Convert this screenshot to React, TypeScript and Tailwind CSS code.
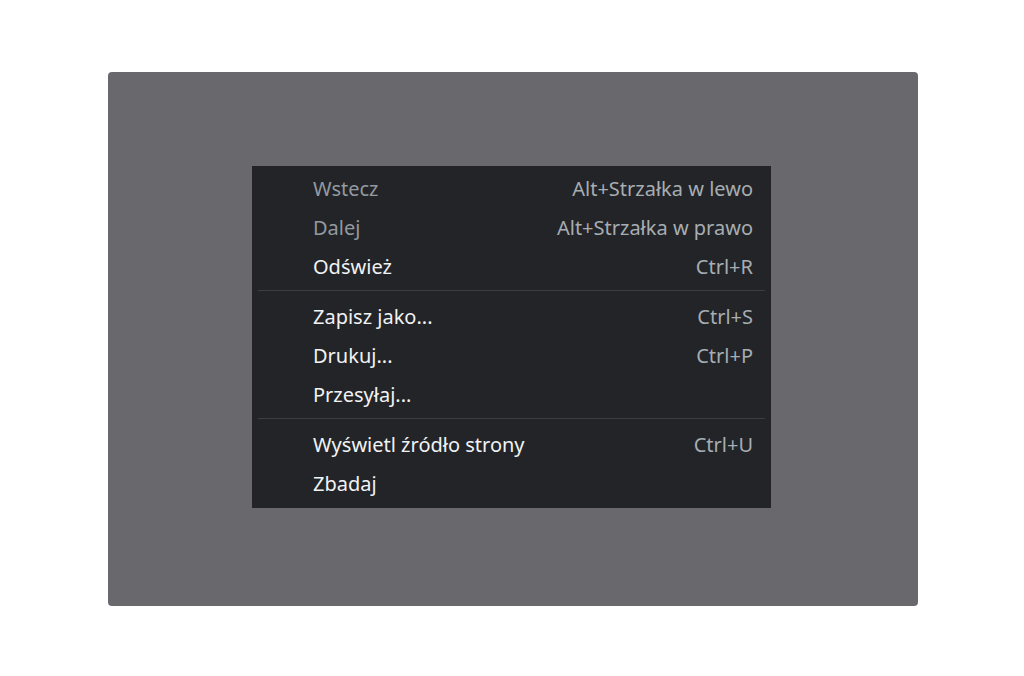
import React from "react";

type Item =
  | { kind: "item"; label: string; shortcut?: string; disabled?: boolean }
  | { kind: "sep" };

const items: Item[] = [
  { kind: "item", label: "Wstecz", shortcut: "Alt+Strzałka w lewo", disabled: true },
  { kind: "item", label: "Dalej", shortcut: "Alt+Strzałka w prawo", disabled: true },
  { kind: "item", label: "Odśwież", shortcut: "Ctrl+R" },
  { kind: "sep" },
  { kind: "item", label: "Zapisz jako...", shortcut: "Ctrl+S" },
  { kind: "item", label: "Drukuj...", shortcut: "Ctrl+P" },
  { kind: "item", label: "Przesyłaj..." },
  { kind: "sep" },
  { kind: "item", label: "Wyświetl źródło strony", shortcut: "Ctrl+U" },
  { kind: "item", label: "Zbadaj" },
];

export default function App() {
  return (
    <div
      className="w-[1024px] h-[676px] bg-white pl-[108px] pt-[72px]"
      style={{ fontFamily: '"Noto Sans", "Open Sans", sans-serif' }}
    >
      <div className="w-[810px] h-[534px] rounded-[4px] bg-[#69686d] pl-[144px] pt-[94px]">
        <div className="w-[519px] h-[342px] bg-[#232427] pt-[3px] pb-[5px]">
          {items.map((it, i) =>
            it.kind === "sep" ? (
              <div key={i} className="h-[11px] pt-[4px] pl-[6px] pr-[6px]">
                <div className="h-[1px] bg-[#3c3d41]" />
              </div>
            ) : (
              <div
                key={i}
                className="h-[39px] flex items-center justify-between pl-[61px] pr-[18px] text-[20px] leading-none"
              >
                <span className={it.disabled ? "text-[#929aa0]" : "text-[#f0f2f4]"}>
                  {it.label}
                </span>
                {it.shortcut && (
                  <span className="text-[#a7adb2]">{it.shortcut}</span>
                )}
              </div>
            )
          )}
        </div>
      </div>
    </div>
  );
}
